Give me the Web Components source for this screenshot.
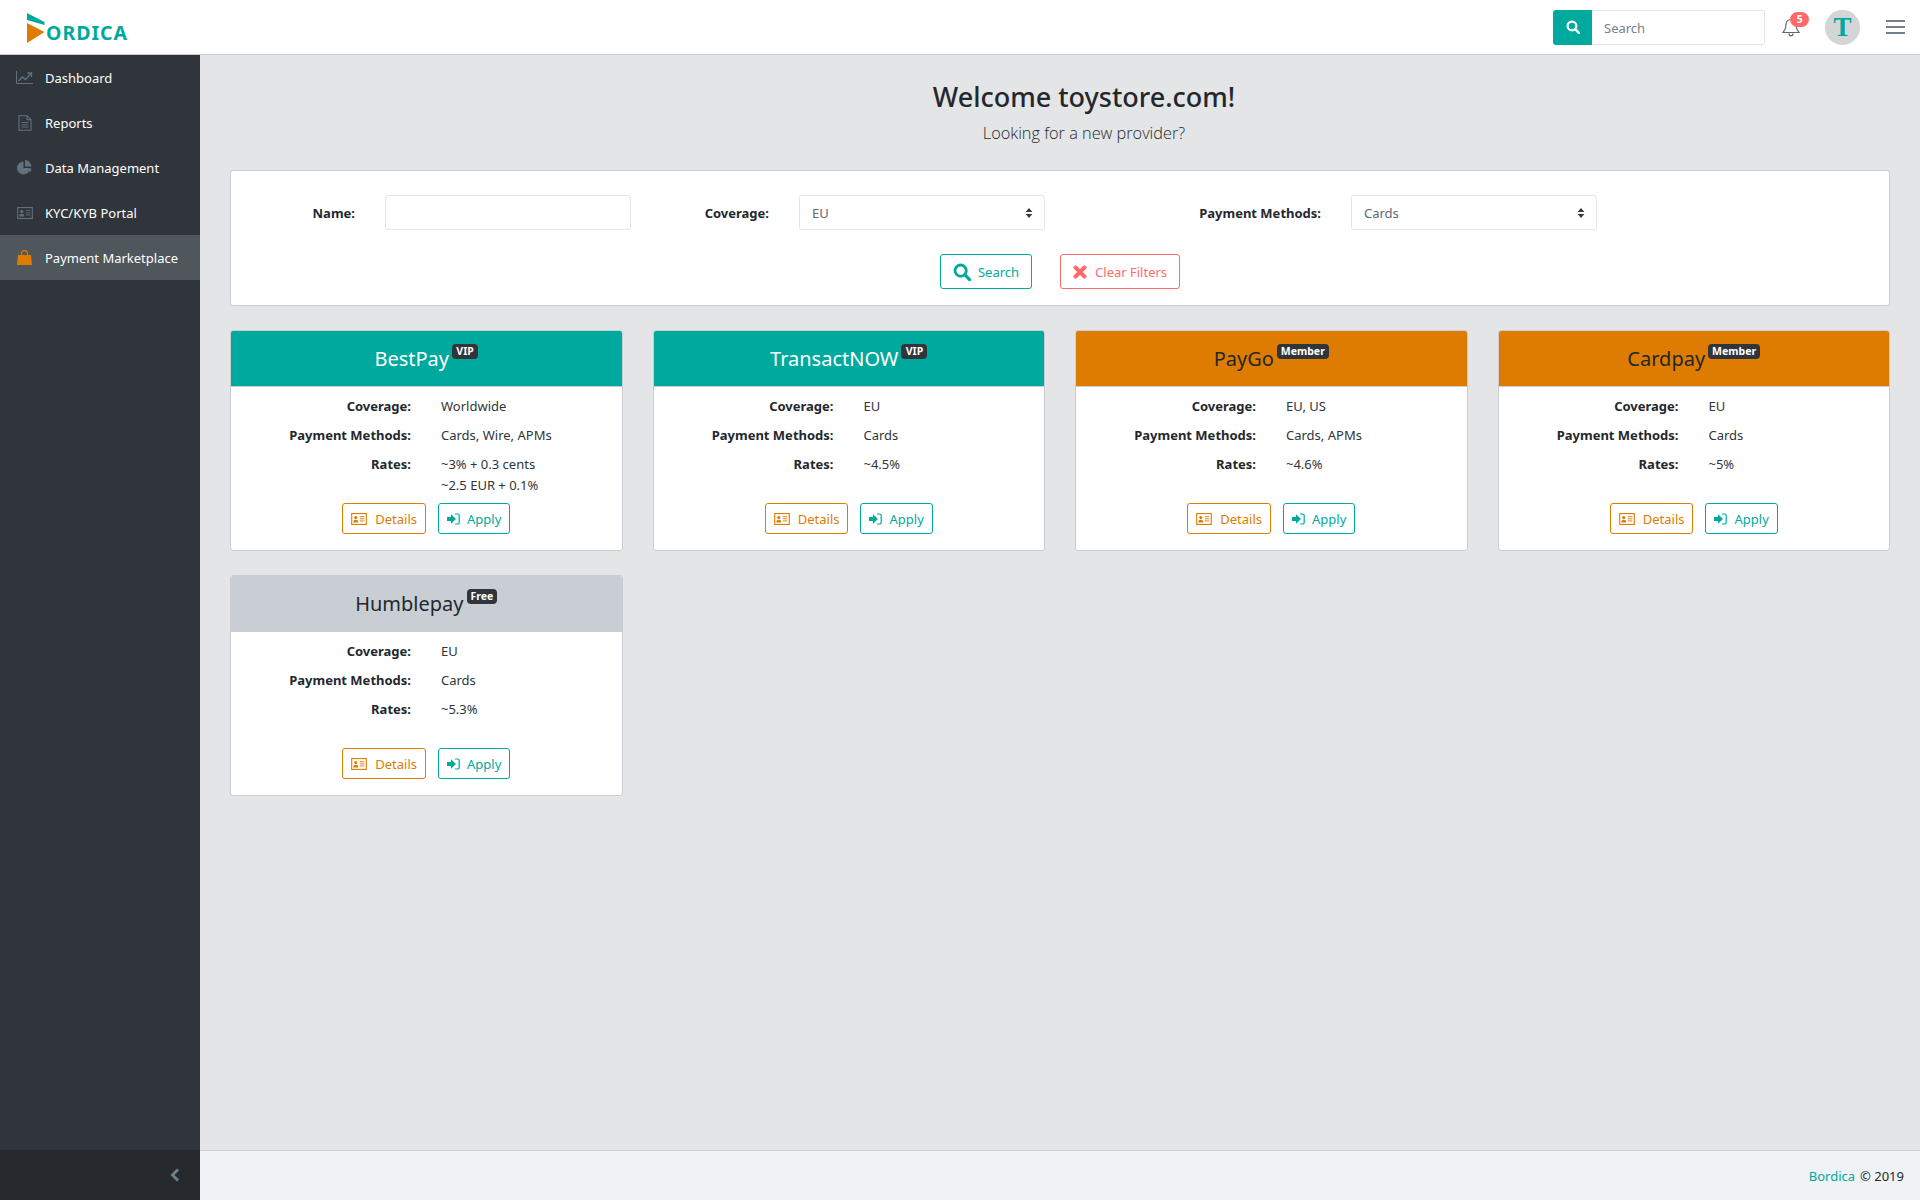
<!DOCTYPE html>
<html>
<head>
<meta charset="utf-8">
<title>Bordica</title>
<style>
  html, body { margin: 0; height: 100%; }
  body { font-family: "Noto Sans", "Open Sans", sans-serif; font-size: 13px; color: #23282c; }
</style>
</head>
<body>
<app-shell>
  <top-bar slot="top"></top-bar>
  <side-nav slot="side">
    <nav-item icon="chart">Dashboard</nav-item>
    <nav-item icon="file">Reports</nav-item>
    <nav-item icon="pie">Data Management</nav-item>
    <nav-item icon="idcard">KYC/KYB Portal</nav-item>
    <nav-item icon="bag" active>Payment Marketplace</nav-item>
  </side-nav>
  <market-page>
    <filter-panel></filter-panel>
    <provider-card name="BestPay" badge="VIP" tone="teal" coverage="Worldwide" methods="Cards, Wire, APMs" rates="~3% + 0.3 cents|~2.5 EUR + 0.1%"></provider-card>
    <provider-card name="TransactNOW" badge="VIP" tone="teal" coverage="EU" methods="Cards" rates="~4.5%"></provider-card>
    <provider-card name="PayGo" badge="Member" tone="orange" coverage="EU, US" methods="Cards, APMs" rates="~4.6%"></provider-card>
    <provider-card name="Cardpay" badge="Member" tone="orange" coverage="EU" methods="Cards" rates="~5%"></provider-card>
    <provider-card name="Humblepay" badge="Free" tone="grey" coverage="EU" methods="Cards" rates="~5.3%"></provider-card>
  </market-page>
  <app-footer slot="foot"></app-footer>
</app-shell>

<script>
const icons = {
  chart: '<svg viewBox="0 0 17 13" width="17" height="13"><path d="M.5 0v12.500H17" fill="none" stroke="currentColor"/><path d="M2.500 10l4-4 3 2.500 5-5.500M11.500 2h4v4" fill="none" stroke="currentColor" stroke-width="1.300"/></svg>',
  file: '<svg viewBox="0 0 14 16" width="14" height="16"><path d="M1 .7h8l4 4v10.600H1zM9 .7v4h4" fill="none" stroke="currentColor" stroke-width="1.100"/><path d="M3.500 7.500h7M3.500 9.800h7M3.500 12h7" stroke="currentColor"/></svg>',
  pie: '<svg viewBox="0 0 15 15" width="15" height="15"><path d="M6.500 1.500a6.500 6.500 0 1 0 6.500 6.500H6.500z" fill="currentColor"/><path d="M8 0a7 7 0 0 1 6.500 6.500H8z" fill="currentColor"/><path d="M9 8.500h5.500a6 6 0 0 1-1.700 3.800z" fill="currentColor"/></svg>',
  idcard: '<svg viewBox="0 0 17 13" width="16" height="12"><rect x=".6" y=".6" width="15.800" height="11.800" fill="none" stroke="currentColor" stroke-width="1.200"/><circle cx="5" cy="5" r="1.700" fill="currentColor"/><path d="M2.300 10.200c0-2 1-2.800 2.700-2.800s2.700.8 2.700 2.800z" fill="currentColor"/><path d="M9.300 4h5M9.300 6.300h5M9.300 8.600h5" stroke="currentColor"/></svg>',
  bag: '<svg viewBox="0 0 15 15" width="15" height="15"><path d="M1 5h13l1 10H0z" fill="currentColor"/><path d="M4.500 7V3.500a3 3 0 0 1 6 0V7" fill="none" stroke="currentColor" stroke-width="1.300"/></svg>',
  search: '<svg viewBox="0 0 16 16" width="100%" height="100%"><circle cx="6.800" cy="6.800" r="5" fill="none" stroke="currentColor" stroke-width="2.500"/><path d="M10.600 10.600l4.200 4.200" stroke="currentColor" stroke-width="2.800" stroke-linecap="round"/></svg>',
  times: '<svg viewBox="0 0 14 14" width="14" height="14"><path d="M2.500 2.500l9 9M11.500 2.500l-9 9" stroke="currentColor" stroke-width="4" stroke-linecap="round"/></svg>',
  signin: '<svg viewBox="0 0 13 12" width="13" height="12"><path d="M0 4h4V1.200L9 6 4 10.800V8H0z" fill="currentColor"/><path d="M8 1h2.600a1.600 1.600 0 0 1 1.600 1.600v6.800a1.600 1.600 0 0 1-1.600 1.600H8" fill="none" stroke="currentColor" stroke-width="1.200"/></svg>',
  updown: '<svg viewBox="0 0 8 12" width="8" height="12"><path d="M4 1l3.400 4H.6zM4 11L.6 7h6.800z" fill="#343a40"/></svg>'
};

class AppShell extends HTMLElement {
  constructor() {
    super();
    this.attachShadow({ mode: 'open' }).innerHTML = `
      <style>
        :host { display: grid; height: 1200px; grid-template: 55px 1fr 50px / 200px 1fr; background: #e4e5e6; overflow: hidden; }
        ::slotted([slot=top]) { grid-column: 1 / 3; }
        ::slotted([slot=side]) { grid-row: 2 / 4; }
      </style>
      <slot name="top"></slot>
      <slot name="side"></slot>
      <slot></slot>
      <slot name="foot"></slot>`;
  }
}

class TopBar extends HTMLElement {
  constructor() {
    super();
    this.attachShadow({ mode: 'open' }).innerHTML = `
      <style>
        :host { display: flex; align-items: center; background: #fff; border-bottom: 1px solid #c8ced3; height: 55px; box-sizing: border-box; }
        .logo { display: flex; align-items: flex-start; margin-left: 27px; height: 54px; }
        .logo svg { display: block; margin-top: 13px; flex: none; }
        .logo span { color: #00a99d; font: 700 19.500px/20px "Noto Sans", sans-serif; letter-spacing: 1px; margin: 23px 0 0 1px; }
        .right { margin-left: auto; display: flex; align-items: center; }
        .go { width: 39px; height: 35px; background: #00a99d; color: #fff; border-radius: 3px 0 0 3px; display: flex; align-items: center; justify-content: center; }
        .go i { display: block; width: 14px; height: 14px; }
        .box { width: 173px; height: 35px; box-sizing: border-box; border: 1px solid #e4e7ea; border-left: 0; border-radius: 0 3px 3px 0; color: #73818f; display: flex; align-items: center; padding: 1px 0 0 12px; font-size: 13px; }
        .bell { position: relative; margin-left: 17px; width: 18px; height: 30px; display: flex; align-items: center; }
        .bell b { position: absolute; left: 8px; top: 0; min-width: 19px; height: 15px; border-radius: 8px; background: #ff6b6b; color: #fff; font: 700 10px/15px "Noto Sans", sans-serif; text-align: center; }
        .ava { width: 35px; height: 35px; border-radius: 50%; background: #d4d5d6; color: #00a99d; margin-left: 25px; font: 700 27px/35px "Liberation Serif", serif; text-align: center; }
        .menu { margin: 0 15px 0 26px; width: 19px; height: 14px; border-top: 2px solid #73818f; border-bottom: 2px solid #73818f; box-sizing: border-box; position: relative; }
        .menu::after { content: ""; position: absolute; left: 0; right: 0; top: 4px; height: 2px; background: #73818f; }
      </style>
      <div class="logo">
        <svg width="18" height="31" viewBox="0 0 18 31"><path d="M0 0l17.500 9v3L0 7z" fill="#00a99d"/><path d="M0 10l17.500 9L0 30z" fill="#dd7c00"/></svg>
        <span>ORDICA</span>
      </div>
      <div class="right">
        <div class="go"><i>${icons.search}</i></div>
        <div class="box">Search</div>
        <div class="bell">
          <svg width="18" height="20" viewBox="0 0 18 20"><path d="M9 2.500c-3.300 0-5 2.500-5 5.500 0 4-1.200 5.500-3 7.500h16c-1.800-2-3-3.500-3-7.500 0-3-1.700-5.500-5-5.500zM7 16.500c0 1.400.9 2.300 2 2.300s2-.9 2-2.300" fill="none" stroke="#5c6873" stroke-width="1.200"/></svg>
          <b>5</b>
        </div>
        <div class="ava">T</div>
        <div class="menu"></div>
      </div>`;
  }
}

class SideNav extends HTMLElement {
  constructor() {
    super();
    this.attachShadow({ mode: 'open' }).innerHTML = `
      <style>
        :host { display: flex; flex-direction: column; background: #2f353a; }
        .list { flex: 1; }
        .foot { height: 50px; background: #262a2e; color: #73818f; display: flex; align-items: center; justify-content: flex-end; padding-right: 20px; }
      </style>
      <div class="list"><slot></slot></div>
      <div class="foot"><svg width="10" height="14" viewBox="0 0 10 14"><path d="M8 1.500L2.500 7 8 12.500" fill="none" stroke="currentColor" stroke-width="2.800"/></svg></div>`;
  }
}

class NavItem extends HTMLElement {
  constructor() {
    super();
    const active = this.hasAttribute('active');
    this.attachShadow({ mode: 'open' }).innerHTML = `
      <style>
        :host { display: flex; align-items: center; height: 45px; color: #fff; font-size: 13px; background: ${active ? '#4f565c' : 'transparent'}; }
        i { width: 17px; margin: 0 12px 0 16px; display: flex; justify-content: center; color: ${active ? '#dd7c00' : '#63707e'}; }
      </style>
      <i>${icons[this.getAttribute('icon')]}</i>
      <slot></slot>`;
  }
}

class MarketPage extends HTMLElement {
  constructor() {
    super();
    this.attachShadow({ mode: 'open' }).innerHTML = `
      <style>
        :host { display: block; padding: 0 30px; }
        .head { padding-left: 48px; }
        h1 { margin: 0; padding-top: 24px; font: 500 27px/36px "Noto Sans", sans-serif; text-align: center; color: #23282c; }
        p { margin: 5px 0 0; height: 50px; font: 300 16.300px/26px "Open Sans", sans-serif; text-align: center; color: #23282c; }
        .grid { display: grid; grid-template-columns: repeat(4, 1fr); column-gap: 30px; row-gap: 24px; }
        ::slotted(filter-panel) { grid-column: 1 / 5; }
      </style>
      <div class="head">
        <h1>Welcome toystore.com!</h1>
        <p>Looking for a new provider?</p>
      </div>
      <div class="grid"><slot></slot></div>`;
  }
}

class FilterPanel extends HTMLElement {
  constructor() {
    super();
    this.attachShadow({ mode: 'open' }).innerHTML = `
      <style>
        :host { display: block; background: #fff; border: 1px solid #c8ced3; border-radius: 3px; height: 136px; box-sizing: border-box; }
        .row { display: grid; grid-template-columns: 154px 246px 168px 246px 306px 246px; align-items: center; padding-top: 24px; }
        label { font-weight: 700; text-align: right; padding-right: 30px; font-size: 13px; }
        .field { height: 35px; border: 1px solid #e4e7ea; border-radius: 3px; box-sizing: border-box; display: flex; align-items: center; justify-content: space-between; padding: 0 11px 0 12px; color: #5c6873; }
        .actions { display: flex; justify-content: center; gap: 28px; margin-top: 24px; }
        button { font: inherit; font-size: 13px; background: #fff; height: 35px; border-radius: 3px; border: 1px solid; display: flex; align-items: center; gap: 7px; padding: 0 12px; }
        .s { color: #00a99d; border-color: #00a99d; }
        .s i { width: 18px; height: 18px; display: block; }
        .c { color: #ff6b6b; border-color: #ff6b6b; gap: 8px; }
        .c svg { display: block; }
      </style>
      <div class="row">
        <label>Name:</label><div class="field"></div>
        <label>Coverage:</label><div class="field">EU ${icons.updown}</div>
        <label>Payment Methods:</label><div class="field">Cards ${icons.updown}</div>
      </div>
      <div class="actions">
        <button class="s"><i>${icons.search}</i>Search</button>
        <button class="c">${icons.times}Clear Filters</button>
      </div>`;
  }
}

class ProviderCard extends HTMLElement {
  constructor() {
    super();
    const a = n => this.getAttribute(n);
    const rates = a('rates').split('|').map(r => `<div>${r}</div>`).join('');
    const heads = {
      teal: 'background:#00a99d;color:#fff',
      orange: 'background:#dd7c00;color:#23282c',
      grey: 'background:#c8ced3;color:#23282c'
    };
    this.attachShadow({ mode: 'open' }).innerHTML = `
      <style>
        :host { display: block; background: #fff; border: 1px solid #c8ced3; border-radius: 3px; height: 221px; box-sizing: border-box; overflow: hidden; }
        header { height: 55px; border-bottom: 1px solid #c8ced3; display: flex; justify-content: center; align-items: center; font-size: 20px; ${heads[a('tone')]} }
        .badge { align-self: flex-start; margin: 13px 0 0 3px; min-width: 18px; text-align: center; background: #2f353a; color: #fff; font: 700 10.500px/15px "Noto Sans", sans-serif; padding: 0 4px; border-radius: 4px; }
        dl { margin: 0; height: 116px; padding-top: 9px; box-sizing: border-box; display: grid; grid-template-columns: 180px 1fr; column-gap: 30px; grid-auto-rows: min-content; row-gap: 8px; }
        dt { font-weight: 700; text-align: right; line-height: 21px; }
        dd { margin: 0; line-height: 21px; color: #2f353a; }
        .btns { display: flex; justify-content: center; gap: 12px; }
        button { font: inherit; font-size: 13px; height: 31px; background: #fff; border: 1px solid; border-radius: 3px; display: flex; align-items: center; gap: 8px; padding: 0 8px; }
        .d { color: #dd7c00; border-color: #dd7c00; }
        .a { color: #00a99d; border-color: #00a99d; gap: 7px; }
        button svg { display: block; }
      </style>
      <header><span>${a('name')}</span><b class="badge">${a('badge')}</b></header>
      <dl>
        <dt>Coverage:</dt><dd>${a('coverage')}</dd>
        <dt>Payment Methods:</dt><dd>${a('methods')}</dd>
        <dt>Rates:</dt><dd>${rates}</dd>
      </dl>
      <div class="btns">
        <button class="d">${icons.idcard}Details</button>
        <button class="a">${icons.signin}Apply</button>
      </div>`;
  }
}

class AppFooter extends HTMLElement {
  constructor() {
    super();
    this.attachShadow({ mode: 'open' }).innerHTML = `
      <style>
        :host { display: flex; align-items: center; justify-content: flex-end; background: #f0f3f5; border-top: 1px solid #c8ced3; padding-right: 16px; box-sizing: border-box; height: 50px; font-size: 13px; }
        span { color: #00a99d; margin-right: 5px; }
      </style>
      <span>Bordica</span> © 2019`;
  }
}

customElements.define('app-shell', AppShell);
customElements.define('top-bar', TopBar);
customElements.define('side-nav', SideNav);
customElements.define('nav-item', NavItem);
customElements.define('market-page', MarketPage);
customElements.define('filter-panel', FilterPanel);
customElements.define('provider-card', ProviderCard);
customElements.define('app-footer', AppFooter);
</script>
</body>
</html>
